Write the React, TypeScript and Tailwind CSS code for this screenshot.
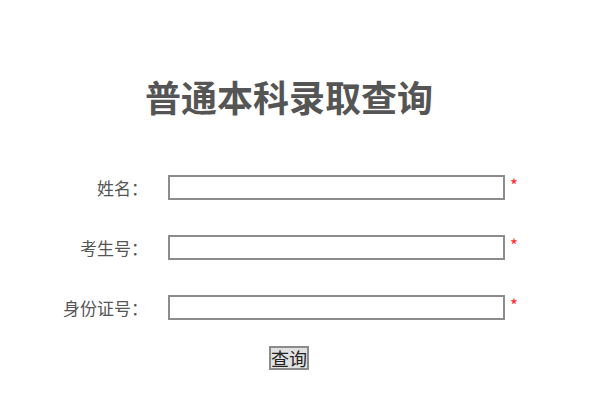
const font = { fontFamily: '"Noto Sans CJK SC", "Noto Sans", sans-serif' }

const fields = ['姓名：', '考生号：', '身份证号：']

function Row({ label }: { label: string }) {
  return (
    <div className="flex items-center h-[25px]">
      <label className="w-[148px] pr-0 text-right text-[17px] leading-[25px] text-[#555]">{label}</label>
      <input
        type="text"
        className="ml-[20px] w-[337px] h-[25px] border-2 border-solid border-[#8c8c8c] bg-white outline-none"
      />
      <span className="ml-[5px] self-start mt-0 text-[17px] leading-[20px] text-[#ff2a2a]">*</span>
    </div>
  )
}

export default function App() {
  return (
    <div className="w-[609px] h-[416px] bg-white" style={font}>
      <div className="w-[578px] flex flex-col items-center pt-[78px]">
        <h1 className="text-[36px] leading-[36px] font-bold text-[#555]">普通本科录取查询</h1>
      </div>
      <div className="flex flex-col gap-[35px] mt-[61px]">
        {fields.map((f) => (
          <Row key={f} label={f} />
        ))}
      </div>
      <div className="w-[578px] flex justify-center mt-[26px]">
        <button className="w-[40px] h-[24px] border-2 border-solid border-[#8c8c8c] bg-[#e1e1e1] p-0 text-[18px] leading-[18px] text-[#222]">
          查询
        </button>
      </div>
    </div>
  )
}
